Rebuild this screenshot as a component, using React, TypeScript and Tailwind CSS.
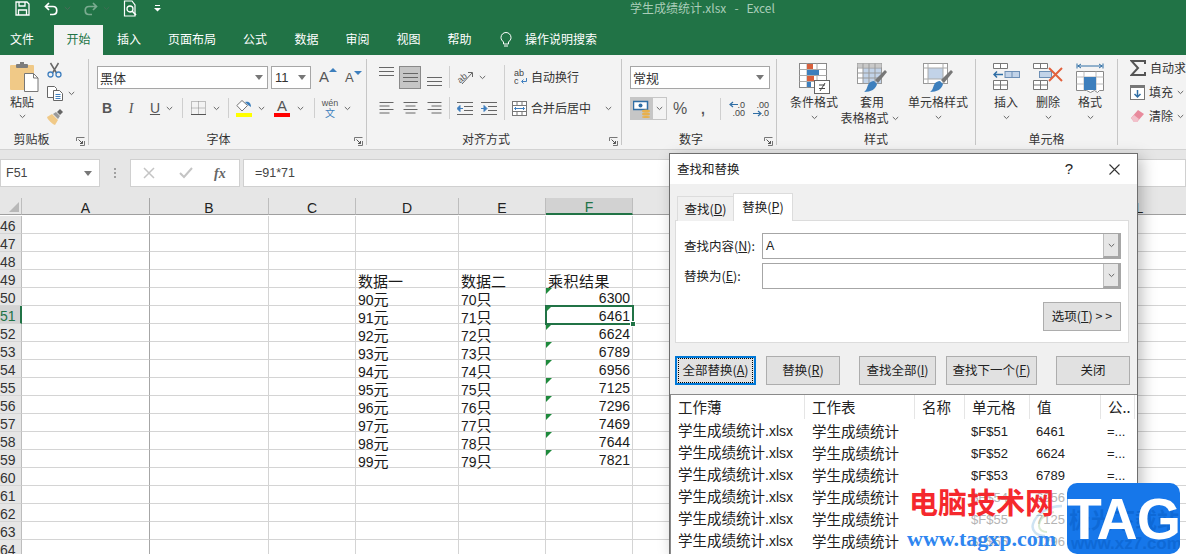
import React from "react";

const cjk = "font-['Noto_Sans_CJK_SC','Noto_Sans',sans-serif]";
const sans = "font-['Liberation_Sans',sans-serif]";

function Chev({ className = "" }: { className?: string }) {
  return (
    <svg width="7" height="5" viewBox="0 0 7 5" className={`shrink-0 ${className}`}>
      <path d="M.8 1l2.7 2.6L6.2 1" fill="none" stroke="#666" strokeWidth="1" />
    </svg>
  );
}

function Tri() {
  return (
    <svg width="8" height="5" viewBox="0 0 8 5" className="shrink-0">
      <path d="M0 0h8L4 5z" fill="#777" />
    </svg>
  );
}

function Sep({ h = "h-[22px]" }: { h?: string }) {
  return <div className={`w-px ${h} bg-[#cfcfcf] shrink-0`} />;
}

function Launcher() {
  return (
    <svg width="9" height="9" viewBox="0 0 9 9" className="shrink-0">
      <path d="M.5 4V.5H8.5M8.5 4v4.5H4" fill="none" stroke="#777" />
      <path d="M2.5 2.5L6.5 6.5M6.5 4v2.5H4" fill="none" stroke="#555" />
    </svg>
  );
}

function Group({ w, label, children, launcher, labelPad = "" }: { w: string; label: string; children: React.ReactNode; launcher?: boolean; labelPad?: string }) {
  return (
    <div className={`${w} shrink-0 h-[86px] mt-[4px] border-r border-[#c6c6c6] flex flex-col`}>
      <div className="flex-1 min-h-0">{children}</div>
      <div className={`h-[14px] pt-[2px] relative flex items-center justify-center text-[12px] text-[#333] whitespace-nowrap ${labelPad}`}>
        {label}
        {launcher && (
          <div className="absolute right-[3px] -bottom-[1px]">
            <Launcher />
          </div>
        )}
      </div>
    </div>
  );
}

function Lines({ kind }: { kind: "l" | "c" | "r" }) {
  const ws = [14, 10, 14, 10];
  return (
    <svg width="15" height="14" viewBox="0 0 15 14" className="shrink-0">
      {ws.map((w, i) => {
        const x = kind === "l" ? 0.5 : kind === "c" ? 0.5 + (14 - w) / 2 : 14.5 - w;
        return <path key={i} d={`M${x} ${1.5 + i * 3.5}h${w}`} stroke="#666" strokeWidth="1" />;
      })}
    </svg>
  );
}

function VLines() {
  return (
    <svg width="15" height="9" viewBox="0 0 15 9" className="shrink-0">
      <path d="M0 .5h15M0 4.5h15M0 8.5h15" stroke="#666" />
    </svg>
  );
}

function PasteIcon() {
  return (
    <svg width="29" height="30" viewBox="0 0 29 30" className="shrink-0">
      <rect x="0" y="3" width="24" height="25" rx="1" fill="#f0c987" />
      <rect x="6" y="2" width="12" height="4" rx="1" fill="#7d7d7d" />
      <rect x="10" y="0" width="4" height="3" fill="#7d7d7d" />
      <path d="M14.500 11.500h9l4.500 4.500v13.500h-13.500z" fill="#fff" stroke="#777" />
      <path d="M23.500 11.500v4.500h4.500" fill="none" stroke="#777" />
    </svg>
  );
}

function Scissors() {
  return (
    <svg width="15" height="16" viewBox="0 0 15 16" className="shrink-0">
      <path d="M3.500 1l6 10M11.500 1l-6 10" stroke="#666" strokeWidth="1.500" fill="none" />
      <circle cx="3.500" cy="12.500" r="2.500" fill="none" stroke="#3f7fbf" strokeWidth="1.300" />
      <circle cx="11.500" cy="12.500" r="2.500" fill="none" stroke="#3f7fbf" strokeWidth="1.300" />
    </svg>
  );
}

function CopyIcon() {
  return (
    <svg width="16" height="15" viewBox="0 0 16 15" className="shrink-0">
      <path d="M.5.5h7l2 2v9h-9z" fill="#fff" stroke="#666" />
      <path d="M6.500 4.500h6l3 3v7h-9z" fill="#fff" stroke="#666" />
      <path d="M8.500 8.500h5M8.500 10.500h5M8.500 12.500h5" stroke="#3f7fbf" />
    </svg>
  );
}

function BrushIcon() {
  return (
    <svg width="16" height="16" viewBox="0 0 16 16" className="shrink-0">
      <path d="M0 8l5-3 6 6-3 5C5 15 1 11 0 8z" fill="#f0c987" />
      <path d="M6 5l3-2 4 4-2 3z" fill="#9a9a9a" />
      <path d="M10 3l3-3 3 3-3 3z" fill="#666" />
    </svg>
  );
}

function WrapIcon() {
  return (
    <svg width="14" height="16" viewBox="0 0 14 16" className="shrink-0">
      <text x="0" y="7" fontSize="9" fill="#444" fontFamily="Liberation Sans">ab</text>
      <text x="0" y="15" fontSize="9" fill="#444" fontFamily="Liberation Sans">c</text>
      <path d="M12.500 9v3.500H8M9.500 10.500l-2 2 2 2" fill="none" stroke="#3f7fbf" />
    </svg>
  );
}

function MergeIcon() {
  return (
    <svg width="15" height="15" viewBox="0 0 15 15" className="shrink-0">
      <rect x=".5" y=".5" width="14" height="14" fill="#fff" stroke="#777" />
      <path d="M.5 4.500h14M.5 10.500h14M5 .5v4M10 .5v4M5 10.500v4M10 10.500v4" stroke="#777" />
      <path d="M2.500 7.500h10M4 6l-1.500 1.500L4 9M11 6l1.500 1.500L11 9" fill="none" stroke="#3f7fbf" />
    </svg>
  );
}

function OrientIcon() {
  return (
    <svg width="17" height="15" viewBox="0 0 17 15" className="shrink-0">
      <text x="0" y="11" fontSize="9" fill="#555" fontFamily="Liberation Sans" transform="rotate(-38 5 8)">ab</text>
      <path d="M5 14L15 3M11 2.500h4.500V7" fill="none" stroke="#666" />
    </svg>
  );
}

function Indent({ right }: { right?: boolean }) {
  return (
    <svg width="16" height="13" viewBox="0 0 16 13" className="shrink-0">
      <path d="M0 .5h16M7 4.500h9M7 8.500h9M0 12.500h16" stroke="#666" />
      {right ? (
        <path d="M0 6.500h5M3 3.500l3 3-3 3z" fill="#3f7fbf" stroke="#3f7fbf" />
      ) : (
        <path d="M6 6.500H1M3 3.500l-3 3 3 3z" fill="#3f7fbf" stroke="#3f7fbf" />
      )}
    </svg>
  );
}

function CurrencyIcon() {
  return (
    <svg width="18" height="18" viewBox="0 0 18 18" className="shrink-0">
      <rect x=".5" y="1.500" width="14" height="8" fill="#fff" stroke="#2f6ea5" strokeWidth="1.500" />
      <circle cx="7.500" cy="5.500" r="2" fill="#2f6ea5" />
      <ellipse cx="13" cy="11" rx="4" ry="1.500" fill="#e8b04c" />
      <ellipse cx="13" cy="14" rx="4" ry="1.500" fill="#e8b04c" />
      <ellipse cx="13" cy="17" rx="4" ry="1" fill="#e8b04c" />
    </svg>
  );
}

function DecIcon({ more }: { more?: boolean }) {
  return (
    <div className={`relative w-[16px] h-[16px] text-[9px] leading-[8px] ${sans} text-[#444] text-right`}>
      <div>{more ? ".00" : ".0"}</div>
      <div>{more ? ".0" : ".00"}</div>
      <svg width="9" height="7" viewBox="0 0 9 7" className={`absolute left-0 ${more ? "top-[9px]" : "top-0"}`}>
        {more ? (
          <path d="M0 3.500h7M5 1l3 2.500L5 6" fill="none" stroke="#2f6ea5" strokeWidth="1.200" />
        ) : (
          <path d="M9 3.500H2M4 1L1 3.500 4 6" fill="none" stroke="#2f6ea5" strokeWidth="1.200" />
        )}
      </svg>
    </div>
  );
}

function CondIcon() {
  return (
    <svg width="31" height="31" viewBox="0 0 31 31" className="shrink-0">
      <rect x=".5" y=".5" width="27" height="24" fill="#fff" stroke="#888" />
      <path d="M.5 6.500h27M.5 12.500h27M.5 18.500h27M8 .5v24M18 .5v24" stroke="#aaa" />
      <rect x="8" y="1" width="6" height="5" fill="#d8603c" />
      <rect x="8" y="7" width="12" height="5" fill="#3d7fbd" />
      <rect x="8" y="13" width="7" height="5" fill="#d8603c" />
      <rect x="8" y="19" width="4" height="5" fill="#3d7fbd" />
      <rect x="15.500" y="17.500" width="15" height="13" fill="#fff" stroke="#666" />
      <path d="M20 22h6M20 25.500h6M26 20l-5 8" stroke="#444" fill="none" />
    </svg>
  );
}

function TableIcon({ whole }: { whole?: boolean }) {
  return (
    <svg width="30" height="30" viewBox="0 0 30 30" className="shrink-0">
      <rect x=".5" y=".5" width="24" height="20" fill="#fff" stroke="#999" />
      {whole ? (
        <rect x="5" y="5" width="15" height="11" fill="#c2d3e8" />
      ) : (
        <>
          <rect x=".5" y=".5" width="24" height="4" fill="#c9c9c9" />
          <rect x="6" y="5" width="18" height="15" fill="#c2d3e8" />
          <path d="M.5 5h24M.5 10h24M.5 15h24M6 .5v20M12 .5v20M18 .5v20" stroke="#999" fill="none" />
        </>
      )}
      {whole && <path d="M.5 5h24M.5 16h24M5 .5v20M20 .5v20" stroke="#aaa" fill="none" />}
      <path d="M28 7l2 2-9 11-3-3z" fill="#777" />
      <path d="M17 18l3 3c-1 5-6 8-13 8 3-2 3-5 4-7 1-3 4-4 6-4z" fill="#3d7fbd" />
    </svg>
  );
}

function InsertIcon() {
  return (
    <svg width="27" height="27" viewBox="0 0 27 27" className="shrink-0">
      <path d="M.5.500h14v5h-14zM7.500.500v5M.5 17.500h14v9h-14zM.5 22h14M7.500 17.500v9" fill="#fff" stroke="#777" />
      <rect x="12" y="8.500" width="14.500" height="6" fill="#c2d3e8" stroke="#6d8fb5" />
      <path d="M19 8.500v6" stroke="#6d8fb5" />
      <path d="M1 11.500h9M4 8.500l-3 3 3 3" fill="none" stroke="#2f6ea5" strokeWidth="1.500" />
    </svg>
  );
}

function DeleteIcon() {
  return (
    <svg width="30" height="27" viewBox="0 0 30 27" className="shrink-0">
      <path d="M.5.500h14v5h-14zM7.500.500v5M.5 17.500h14v9h-14zM.5 22h14M7.500 17.500v9" fill="#fff" stroke="#777" />
      <rect x="6.500" y="8.500" width="12" height="6" fill="#c2d3e8" stroke="#6d8fb5" />
      <path d="M16 5l13 13M29 5L16 18" stroke="#e2603c" strokeWidth="2" />
    </svg>
  );
}

function FormatIcon() {
  return (
    <svg width="28" height="30" viewBox="0 0 28 30" className="shrink-0">
      <path d="M1 .5v5M27 .5v5M1.500 3h25M5 1L2 3l3 2M23 1l3 2-3 2" fill="none" stroke="#2f6ea5" />
      <path d="M.5 8.500h27v19l-4 0-2 2-3-2-4 2-4-2-10 0z" fill="#fff" stroke="#888" />
      <path d="M.5 14h27M.5 21h27M8 8.500v19M20 8.500v19" stroke="#bbb" />
      <rect x="8" y="14" width="12" height="13" fill="#3d7fbd" />
    </svg>
  );
}

function BigButton({ icon, label, arrow = true }: { icon: React.ReactNode; label: string; arrow?: boolean }) {
  return (
    <div className="flex flex-col items-center text-[12px] leading-[16px] text-[#333] whitespace-nowrap">
      <div className="h-[31px] flex items-start">{icon}</div>
      <div>{label}</div>
      {arrow && (
        <div className="h-[14px] flex items-center">
          <Chev />
        </div>
      )}
    </div>
  );
}

function Ribbon() {
  return (
    <div className={`h-[95px] bg-[#f3f3f3] flex border-b border-[#d2d2d2] overflow-hidden shrink-0 ${cjk}`}>
      <Group w="w-[89px]" label="剪贴板" launcher labelPad="pr-[25px]">
        <div className="flex pl-[10px] pt-[3px] gap-[8px]">
          <div className="flex flex-col items-center text-[12px] text-[#333] leading-[16px]">
            <PasteIcon />
            <div className="mt-[2px] -ml-[5px]">粘贴</div>
            <div className="h-[13px] flex items-center -ml-[5px]">
              <Chev />
            </div>
          </div>
          <div className="flex flex-col gap-[8px]">
            <Scissors />
            <div className="flex items-center gap-[5px]">
              <CopyIcon />
              <Chev />
            </div>
            <BrushIcon />
          </div>
        </div>
      </Group>
      <Group w="w-[278px]" label="字体" launcher labelPad="pr-[18px]">
        <div className="flex flex-col pl-[8px] pt-[7px]">
          <div className="flex items-center h-[23px]">
            <div className="w-[171px] h-[23px] bg-white border border-[#a6a6a6] flex items-center justify-between pl-[2px] pr-[4px] text-[13px] text-[#333]">
              黑体
              <Tri />
            </div>
            <div className={`w-[40px] h-[23px] ml-[3px] bg-white border border-[#a6a6a6] flex items-center justify-between pl-[3px] pr-[4px] text-[13px] text-[#333] ${sans}`}>
              11
              <Tri />
            </div>
            <div className={`relative ml-[8px] w-[16px] text-[15px] ${sans} text-[#555]`}>
              A
              <div className="absolute right-[-2px] top-[2px] w-0 h-0 border-x-[4px] border-x-transparent border-b-[4px] border-b-[#3d7fbd]" />
            </div>
            <div className={`relative ml-[10px] w-[14px] text-[13px] ${sans} text-[#555]`}>
              A
              <div className="absolute right-[-3px] top-[3px] w-0 h-0 border-x-[4px] border-x-transparent border-t-[4px] border-t-[#3d7fbd]" />
            </div>
          </div>
          <div className={`flex items-center h-[22px] mt-[8px] text-[#555] ${sans} text-[14px]`}>
            <div className="w-[24px] font-bold text-center -ml-[2px]">B</div>
            <div className="w-[24px] italic text-center font-['Liberation_Serif',serif]">I</div>
            <div className="w-[24px] underline text-center">U</div>
            <Chev className="-ml-[1px]" />
            <div className="ml-[9px]">
              <Sep h="h-[20px]" />
            </div>
            <div className="ml-[8px]">
              <svg width="15" height="14" viewBox="0 0 15 14" className="shrink-0">
                <path d="M.5.500h14v13H.5zM7.500.500v13M.5 7h14" fill="none" stroke="#888" strokeDasharray="1 1" />
                <path d="M0 13.500h15" stroke="#555" />
              </svg>
            </div>
            <Chev className="ml-[7px]" />
            <div className="ml-[8px]">
              <Sep h="h-[20px]" />
            </div>
            <div className="ml-[7px] flex flex-col items-center w-[16px]">
              <svg width="16" height="12" viewBox="0 0 16 12" className="shrink-0">
                <path d="M6 .5L.8 5.500 6 11l5.500-5.500z" fill="#fff" stroke="#777" />
                <path d="M9 2c3-1 6 0 6 5l-3-2z" fill="#3d7fbd" />
              </svg>
              <div className="w-[16px] h-[4px] bg-[#ffff00] mt-[1px]" />
            </div>
            <Chev className="ml-[6px]" />
            <div className="ml-[9px] flex flex-col items-center w-[16px] leading-[12px] text-[15px]">
              A
              <div className="w-[16px] h-[4px] bg-[#ff0000] mt-[1px]" />
            </div>
            <Chev className="ml-[7px]" />
            <div className="ml-[10px]">
              <Sep h="h-[20px]" />
            </div>
            <div className="ml-[7px] flex flex-col items-center w-[16px] text-[9px] leading-[10px]">
              <span className="text-[#555]">wén</span>
              <span className={`text-[#3d7fbd] text-[10px] ${cjk}`}>文</span>
            </div>
            <Chev className="ml-[6px]" />
          </div>
        </div>
      </Group>
      <Group w="w-[255px]" label="对齐方式" launcher labelPad="pr-[16px]">
        <div className="flex pt-[6px] pl-[12px]">
          <div className="flex flex-col w-[70px]">
            <div className="flex items-center h-[24px]">
              <div className="w-[20px] h-[22px] pt-[1px]">
                <VLines />
              </div>
              <div className="w-[22px] h-[23px] bg-[#c6c6c6] border border-[#8a8a8a] flex items-center justify-center">
                <VLines />
              </div>
              <div className="ml-[6px] w-[15px] pt-[8px]">
                <VLines />
              </div>
            </div>
            <div className="flex items-center h-[24px] mt-[7px] gap-[9px]">
              <Lines kind="l" />
              <Lines kind="c" />
              <Lines kind="r" />
            </div>
          </div>
          <div className="flex flex-col">
            <div className="flex items-center h-[24px]">
              <Sep />
              <div className="ml-[7px]">
                <OrientIcon />
              </div>
              <Chev className="ml-[5px]" />
            </div>
            <div className="flex items-center h-[24px] mt-[7px]">
              <Sep />
              <div className="ml-[7px] flex gap-[8px]">
                <Indent />
                <Indent right />
              </div>
            </div>
          </div>
          <div className="ml-[7px]">
            <Sep h="h-[55px]" />
          </div>
          <div className="flex flex-col text-[12px] text-[#333]">
            <div className="flex items-center h-[24px] pl-[9px] gap-[3px]">
              <WrapIcon />
              自动换行
            </div>
            <div className="flex items-center h-[24px] mt-[7px] pl-[7px] gap-[4px]">
              <MergeIcon />
              合并后居中
              <Chev className="ml-[10px]" />
            </div>
          </div>
        </div>
      </Group>
      <Group w="w-[155px]" label="数字" launcher labelPad="pr-[16px]">
        <div className="flex flex-col pl-[8px] pt-[7px]">
          <div className="w-[140px] h-[23px] bg-white border border-[#a6a6a6] flex items-center justify-between pl-[2px] pr-[5px] text-[13px] text-[#333]">
            常规
            <Tri />
          </div>
          <div className="flex items-center h-[23px] mt-[8px]">
            <div className="flex h-[23px] w-[37px] border border-[#c6c6c6]">
              <div className="w-[22px] bg-[#c6c6c6] flex items-center justify-center">
                <CurrencyIcon />
              </div>
              <div className="flex-1 flex items-center justify-center">
                <Chev />
              </div>
            </div>
            <div className={`ml-[6px] w-[20px] text-[16px] text-[#555] ${sans}`}>%</div>
            <div className={`ml-[8px] w-[10px] text-[14px] leading-[14px] font-bold text-[#555] ${sans}`}>,</div>
            <div className="ml-[9px]">
              <Sep />
            </div>
            <div className="ml-[8px]">
              <DecIcon />
            </div>
            <div className="ml-[8px]">
              <DecIcon more />
            </div>
          </div>
        </div>
      </Group>
      <Group w="w-[199px]" label="样式">
        <div className="flex pl-[10px] pt-[4px]">
          <div className="w-[54px]">
            <BigButton icon={<CondIcon />} label="条件格式" />
          </div>
          <div className="w-[64px] -ml-[1px] flex flex-col items-center text-[12px] leading-[16px] text-[#333] whitespace-nowrap">
            <TableIcon />
            <div className="mt-[1px]">套用</div>
            <div className="flex items-center gap-[3px] -ml-[5px]">
              表格格式
              <Chev />
            </div>
          </div>
          <div className="w-[68px]">
            <BigButton icon={<TableIcon whole />} label="单元格样式" />
          </div>
        </div>
      </Group>
      <Group w="w-[142px]" label="单元格">
        <div className="flex pl-[9px] pt-[4px]">
          <div className="w-[42px]">
            <BigButton icon={<InsertIcon />} label="插入" />
          </div>
          <div className="w-[42px]">
            <BigButton icon={<DeleteIcon />} label="删除" />
          </div>
          <div className="w-[42px]">
            <BigButton icon={<FormatIcon />} label="格式" />
          </div>
        </div>
      </Group>
      <div className="flex-1 pl-[12px] pt-[5px] flex flex-col gap-[8px] text-[12px] text-[#333] whitespace-nowrap overflow-hidden">
        <div className="flex items-center h-[16px] gap-[4px]">
          <svg width="16" height="16" viewBox="0 0 16 16" className="shrink-0">
            <path d="M15 4V1H1.500l6.500 7-6.500 7H15v-3" fill="none" stroke="#555" strokeWidth="2" />
          </svg>
          自动求和
        </div>
        <div className="flex items-center h-[16px] gap-[4px]">
          <svg width="15" height="15" viewBox="0 0 15 15" className="shrink-0">
            <rect x=".5" y=".5" width="14" height="14" fill="#fff" stroke="#777" />
            <rect x="0" y="0" width="15" height="3" fill="#777" />
            <path d="M7.500 5v7M4.500 9l3 3 3-3" fill="none" stroke="#2f6ea5" strokeWidth="1.500" />
          </svg>
          填充
          <Chev />
        </div>
        <div className="flex items-center h-[16px] gap-[4px]">
          <svg width="15" height="14" viewBox="0 0 15 14" className="shrink-0">
            <path d="M1 9l7-8 6 4-7 8H4z" fill="#e88a9c" />
            <path d="M1 9l3-3 5 4-2 3H4z" fill="#f2c0ca" />
          </svg>
          清除
          <Chev />
        </div>
      </div>
    </div>
  );
}

function FormulaBar() {
  return (
    <div className={`h-[48px] bg-[#e6e6e6] shrink-0 flex items-center pb-[2px] ${sans}`}>
      <div className="w-[100px] h-[28px] bg-white border border-[#d0d0d0] flex items-center justify-between pl-[5px] pr-[7px] text-[12.500px] text-[#444]">
        F51
        <Tri />
      </div>
      <div className="w-[30px] flex flex-col items-center gap-[2px]">
        <div className="w-[2px] h-[2px] bg-[#a0a0a0]" />
        <div className="w-[2px] h-[2px] bg-[#a0a0a0]" />
        <div className="w-[2px] h-[2px] bg-[#a0a0a0]" />
      </div>
      <div className="w-[110px] h-[28px] bg-white border border-[#d0d0d0] flex items-center pl-[12px]">
        <svg width="12" height="12" viewBox="0 0 12 12" className="shrink-0">
          <path d="M1 1l10 10M11 1L1 11" stroke="#c4c4c4" strokeWidth="1.500" />
        </svg>
        <svg width="14" height="12" viewBox="0 0 14 12" className="ml-[24px] shrink-0">
          <path d="M1 6l4 4 8-9" fill="none" stroke="#c4c4c4" strokeWidth="2" />
        </svg>
        <span className="ml-[21px] italic font-['Liberation_Serif',serif] text-[14px] font-bold text-[#666]">fx</span>
      </div>
      <div className="ml-[3px] flex-1 h-[28px] bg-white border border-[#d0d0d0] flex items-center pl-[11px] text-[12.500px] text-[#444]">
        =91*71
      </div>
    </div>
  );
}

const letters = ["A", "B", "C", "D", "E", "F", "G", "H", "I", "J", "K", "L"];
const hidden = ["G", "H", "I", "J", "K"];
const rows = Array.from({ length: 19 }, (_, i) => 46 + i);

const data: Record<number, { d: string; e: string; f: string }> = {
  50: { d: "90", e: "70", f: "6300" },
  51: { d: "91", e: "71", f: "6461" },
  52: { d: "92", e: "72", f: "6624" },
  53: { d: "93", e: "73", f: "6789" },
  54: { d: "94", e: "74", f: "6956" },
  55: { d: "95", e: "75", f: "7125" },
  56: { d: "96", e: "76", f: "7296" },
  57: { d: "97", e: "77", f: "7469" },
  58: { d: "98", e: "78", f: "7644" },
  59: { d: "99", e: "79", f: "7821" },
};

function Cell({ col, children }: { col: string; children?: React.ReactNode }) {
  const right = hidden.includes(col) || col === "L" ? "" : col === "A" ? "border-r border-r-[#a6a6a6]" : "border-r border-r-[#d4d4d4]";
  return (
    <div className={`relative h-[18px] border-b border-b-[#d4d4d4] ${right} text-[15px] leading-[21px] text-[#1a1a1a] whitespace-nowrap`}>
      {children}
    </div>
  );
}

function Sheet() {
  return (
    <div className={`flex-1 overflow-hidden bg-white ${cjk}`}>
      <div className="grid grid-cols-[22px_128px_119px_87px_103px_87px_87px_92px_92px_92px_92px_92px_93px] auto-rows-[18px]">
        <div className="h-[17px] bg-[#e6e6e6] border-b border-[#9f9f9f] border-r border-r-[#bdbdbd] relative">
          <div className="absolute right-[2px] bottom-[2px] w-0 h-0 border-l-[10px] border-l-transparent border-b-[10px] border-b-[#b8b8b8]" />
        </div>
        {letters.map((l) => (
          <div
            key={l}
            className={`h-[17px] flex items-center justify-center pt-[3px] text-[14px] leading-[14px] ${sans} ${
              l === "F"
                ? "bg-[#d2d2d2] border-b-2 border-b-[#217346] text-[#217346] border-r border-r-[#bdbdbd]"
                : "bg-[#e6e6e6] border-b border-b-[#9f9f9f] text-[#222]"
            } ${l === "A" ? "border-r border-r-[#a6a6a6]" : l < "F" ? "border-r border-r-[#bdbdbd]" : ""}`}
          >
            {l}
          </div>
        ))}
        {rows.map((n) => {
          const r = data[n];
          const sel = n === 51;
          return (
            <React.Fragment key={n}>
              <div
                className={`h-[18px] text-[14px] leading-[20px] overflow-hidden border-b border-b-[#d4d4d4] ${sans} ${
                  sel ? "bg-[#d2d2d2] text-[#217346] border-r-2 border-r-[#217346]" : "bg-[#e6e6e6] text-[#333] border-r border-r-[#bdbdbd]"
                }`}
              >
                {n}
              </div>
              <Cell col="A" />
              <Cell col="B" />
              <Cell col="C" />
              <Cell col="D">
                <div className="pl-[2px]">
                  {n === 49 ? "数据一" : r && (
                    <>
                      <span className={`text-[14px] ${sans}`}>{r.d}</span>元
                    </>
                  )}
                </div>
              </Cell>
              <Cell col="E">
                <div className="pl-[2px]">
                  {n === 49 ? "数据二" : r && (
                    <>
                      <span className={`text-[14px] ${sans}`}>{r.e}</span>只
                    </>
                  )}
                </div>
              </Cell>
              <Cell col="F">
                {n === 49 && <div className="pl-[2px] tracking-[0.500px]">乘积结果</div>}
                {r && (
                  <>
                    <div className="absolute left-0 top-0 w-0 h-0 border-r-[6px] border-r-transparent border-t-[6px] border-t-[#1e8a3c]" />
                    <div className={`text-right pr-[2px] text-[14px] ${sans}`}>{r.f}</div>
                  </>
                )}
                {sel && (
                  <div className="absolute -left-px -top-px w-[89px] h-[20px] border-2 border-[#217346] z-10">
                    <div className="absolute -right-[4px] -bottom-[4px] w-[6px] h-[6px] bg-[#217346] border border-white" />
                  </div>
                )}
              </Cell>
              {hidden.map((c) => (
                <Cell key={c} col={c} />
              ))}
              <Cell col="L" />
            </React.Fragment>
          );
        })}
      </div>
    </div>
  );
}

function DlgBtn({ w, children, primary }: { w: string; children: React.ReactNode; primary?: boolean }) {
  return (
    <div
      className={`${w} h-[29px] shrink-0 flex items-center justify-center bg-[#e1e1e1] text-[12.500px] text-[#222] ${
        primary ? "border-2 border-[#0078d7]" : "border border-[#adadad]"
      }`}
    >
      {primary ? (
        <div className="w-full h-full m-[1px] border border-dotted border-black flex items-center justify-center">{children}</div>
      ) : (
        children
      )}
    </div>
  );
}

function U({ c }: { c: string }) {
  return <span className="underline">{c}</span>;
}

function Combo({ value }: { value?: string }) {
  return (
    <div className="flex-1 h-[26px] bg-white border border-[#a6a6a6] flex items-center justify-between pl-[3px] text-[12.500px] text-[#222]">
      <span className={sans}>{value}</span>
      <div className="w-[17px] h-full bg-[#e6e6e6] border-l border-[#bdbdbd] border-r-2 border-b-2 border-r-[#a6a6a6] border-b-[#a6a6a6] flex items-center justify-center">
        <Chev />
      </div>
    </div>
  );
}

const results = [
  { cell: "$F$51", val: "6461", tone: "text-[#222]" },
  { cell: "$F$52", val: "6624", tone: "text-[#222]" },
  { cell: "$F$53", val: "6789", tone: "text-[#222]" },
  { cell: "$F$54", val: "6956", tone: "text-[#b4b4b4]" },
  { cell: "$F$55", val: "7125", tone: "text-[#b4b4b4]" },
  { cell: "$F$56", val: "7296", tone: "text-[#b4b4b4]" },
];

function Dialog() {
  const cols = "grid grid-cols-[134px_110px_50px_65px_71px_34px]";
  return (
    <div className={`absolute left-[669px] top-[153px] w-[469px] h-[401px] bg-[#f0f0f0] border border-[#6e6e6e] border-b-0 shadow-[4px_4px_14px_rgba(0,0,0,0.25)] flex flex-col overflow-hidden ${cjk}`}>
      <div className="h-[30px] bg-white shrink-0 flex items-center justify-between pl-[7px] pr-[17px] text-[12.500px] text-[#222]">
        查找和替换
        <div className="flex items-center gap-[36px]">
          <span className={`text-[15px] ${sans}`}>?</span>
          <svg width="11" height="11" viewBox="0 0 11 11" className="shrink-0">
            <path d="M.5.500l10 10M10.500.500l-10 10" stroke="#333" strokeWidth="1.100" />
          </svg>
        </div>
      </div>
      <div className="pl-[5px] pr-[8px] pt-[9px] shrink-0">
        <div className="flex items-end h-[28px] pl-[2px] text-[12.500px] text-[#222] relative z-10 -mb-px">
          <div className="w-[56px] h-[25px] bg-[#f0f0f0] border border-[#dcdcdc] border-r-0 border-b-0 flex items-center justify-center">
            查找(<U c="D" />)
          </div>
          <div className="w-[60px] h-[28px] bg-white border border-[#dcdcdc] border-b-0 flex items-center justify-center">
            替换(<U c="P" />)
          </div>
        </div>
        <div className="h-[123px] bg-white border border-[#dcdcdc] pt-[12px] pl-[8px] pr-[7px] text-[12.500px] text-[#222] flex flex-col">
          <div className="flex items-center">
            <div className="w-[78px] shrink-0">
              查找内容(<U c="N" />):
            </div>
            <Combo value="A" />
          </div>
          <div className="flex items-center mt-[4px]">
            <div className="w-[78px] shrink-0">
              替换为(<U c="E" />):
            </div>
            <Combo />
          </div>
          <div className="flex justify-end mt-[13px]">
            <DlgBtn w="w-[78px]">
              选项(<U c="T" />)&nbsp;&gt; &gt;
            </DlgBtn>
          </div>
        </div>
      </div>
      <div className="flex pl-[5px] mt-[13px] shrink-0">
        <DlgBtn w="w-[81px]" primary>
          全部替换(<U c="A" />)
        </DlgBtn>
        <div className="ml-[10px]">
          <DlgBtn w="w-[74px]">
            替换(<U c="R" />)
          </DlgBtn>
        </div>
        <div className="ml-[19px]">
          <DlgBtn w="w-[77px]">
            查找全部(<U c="I" />)
          </DlgBtn>
        </div>
        <div className="ml-[10px]">
          <DlgBtn w="w-[91px]">
            查找下一个(<U c="F" />)
          </DlgBtn>
        </div>
        <div className="ml-[19px]">
          <DlgBtn w="w-[74px]">关闭</DlgBtn>
        </div>
      </div>
      <div className="mt-[9px] flex-1 bg-white border-t border-l border-[#8a8a8a] text-[14.500px] text-[#222] overflow-hidden">
        <div className={`${cols} h-[24px] items-center`}>
          {["工作薄", "工作表", "名称", "单元格", "值", "公.."].map((h) => (
            <div key={h} className="h-[24px] pl-[7px] flex items-center border-r border-[#e5e5e5] whitespace-nowrap overflow-hidden">
              {h}
            </div>
          ))}
        </div>
        {results.map((r) => (
          <div key={r.cell} className={`${cols} h-[22px] items-center whitespace-nowrap`}>
            <div className="pl-[7px]">
              学生成绩统计<span className={`text-[14px] ${sans}`}>.xlsx</span>
            </div>
            <div className="pl-[7px]">学生成绩统计</div>
            <div />
            <div className={`pl-[6px] pt-[2px] text-[13px] ${sans} ${r.tone}`}>{r.cell}</div>
            <div className={`pl-[6px] pt-[2px] text-[13px] ${sans} ${r.tone}`}>{r.val}</div>
            <div className={`pl-[6px] pt-[2px] text-[13px] ${sans}`}>=...</div>
          </div>
        ))}
      </div>
    </div>
  );
}

function Watermark() {
  return (
    <>
      <svg width="34" height="34" viewBox="0 0 34 34" className="absolute left-[1030px] top-[504px] opacity-50">
        <path d="M32 2C18 2 6 10 3 20c-2 7 4 12 12 12" fill="none" stroke="#9ec9e8" strokeWidth="2.500" />
        <path d="M24 8C14 10 9 16 9 22c0 4 4 6 8 6" fill="none" stroke="#b7d8a8" strokeWidth="2" />
      </svg>
      <div className={`absolute left-[909px] top-[484px] text-[29px] leading-[34px] font-bold text-[#f5282d] ${cjk}`}>电脑技术网</div>
      <div className="absolute left-[907px] top-[526px] text-[22px] leading-[26px] font-bold text-[#2f86f0] font-['Liberation_Serif',serif] whitespace-nowrap">www.tagxp.com</div>
      <div className="absolute left-[1067px] top-[483px] w-[113px] h-[71px] bg-[#1677ea] rounded-[10px] overflow-hidden flex items-center justify-center">
        <span className={`absolute left-[2px] top-[22px] text-[22px] leading-[26px] whitespace-nowrap text-[#0e69d6] font-bold ${cjk}`}>极光下载站</span>
        <span className={`absolute left-[4px] bottom-0 text-[17px] leading-[20px] whitespace-nowrap text-[#0e69d6] font-bold ${sans}`}>www.xz7.com</span>
        <span className={`relative text-white font-bold text-[57px] leading-[60px] tracking-[-1px] ${sans}`}>TAG</span>
      </div>
    </>
  );
}

export default function App() {
  const tabs = ["插入", "页面布局", "公式", "数据", "审阅", "视图", "帮助"];
  const widths = ["w-[52px]", "w-[74px]", "w-[52px]", "w-[51px]", "w-[51px]", "w-[51px]", "w-[51px]"];
  return (
    <div className="relative w-[1186px] h-[554px] overflow-hidden flex flex-col bg-white">
      <div className={`h-[25px] bg-[#217346] shrink-0 flex items-start pt-[1px] relative ${cjk}`}>
        <div className="pl-[15px] flex items-center h-[15px]">
          <svg width="15" height="15" viewBox="0 0 15 15" className="shrink-0">
            <path d="M1 1h11l2 2v11H1z" fill="none" stroke="#fff" strokeWidth="1.300" />
            <path d="M4 1v4h6V1M3.500 14V9h8v5" fill="none" stroke="#fff" strokeWidth="1.300" />
          </svg>
          <svg width="15" height="14" viewBox="0 0 15 14" className="ml-[14px] shrink-0">
            <path d="M5 1L1.500 4.500 5 8M2 4.500h7c5 0 5 8 0 8H6" fill="none" stroke="#fff" strokeWidth="1.700" />
          </svg>
          <Chev className="ml-[5px] opacity-60" />
          <svg width="15" height="14" viewBox="0 0 15 14" className="ml-[12px] opacity-40 shrink-0">
            <path d="M10 1l3.500 3.500L10 8M13 4.500H6c-5 0-5 8 0 8h3" fill="none" stroke="#fff" strokeWidth="1.700" />
          </svg>
          <Chev className="ml-[5px] opacity-40" />
          <svg width="15" height="17" viewBox="0 0 15 17" className="ml-[13px] shrink-0">
            <path d="M9 1H1.500v15H12V5z" fill="none" stroke="#fff" strokeWidth="1.200" />
            <circle cx="7" cy="9" r="3" fill="none" stroke="#fff" strokeWidth="1.300" />
            <path d="M9 11l4 4" stroke="#fff" strokeWidth="1.600" />
          </svg>
          <svg width="7" height="7" viewBox="0 0 7 7" className="ml-[16px] shrink-0">
            <path d="M1 .5h5" stroke="#fff" />
            <path d="M0 3h7L3.500 6.500z" fill="#fff" />
          </svg>
        </div>
        <div className="absolute left-[630px] top-0 h-[15px] leading-[15px] text-[12px] text-[#a9cdb8] whitespace-pre">
          学生成绩统计.xlsx   -   Excel
        </div>
      </div>
      <div className={`h-[30px] bg-[#217346] shrink-0 flex text-[12px] text-white ${cjk}`}>
        <div className="w-[54px] pl-[10px] pb-[2px] flex items-center">文件</div>
        <div className="w-[49px] bg-[#f3f3f3] text-[#217346] pb-[2px] flex items-center justify-center">开始</div>
        {tabs.map((t, i) => (
          <div key={t} className={`${widths[i]} pb-[2px] flex items-center justify-center`}>
            {t}
          </div>
        ))}
        <div className="ml-[14px] pb-[2px] flex items-center gap-[12px]">
          <svg width="14" height="16" viewBox="0 0 14 16" className="shrink-0">
            <path d="M4.500 11C3 9.500 2 8.500 2 6.500a5 5 0 0110 0c0 2-1 3-2.500 4.500v2h-5zM5 15h4" fill="none" stroke="#fff" />
          </svg>
          操作说明搜索
        </div>
      </div>
      <Ribbon />
      <FormulaBar />
      <Sheet />
      <Dialog />
      <Watermark />
    </div>
  );
}
